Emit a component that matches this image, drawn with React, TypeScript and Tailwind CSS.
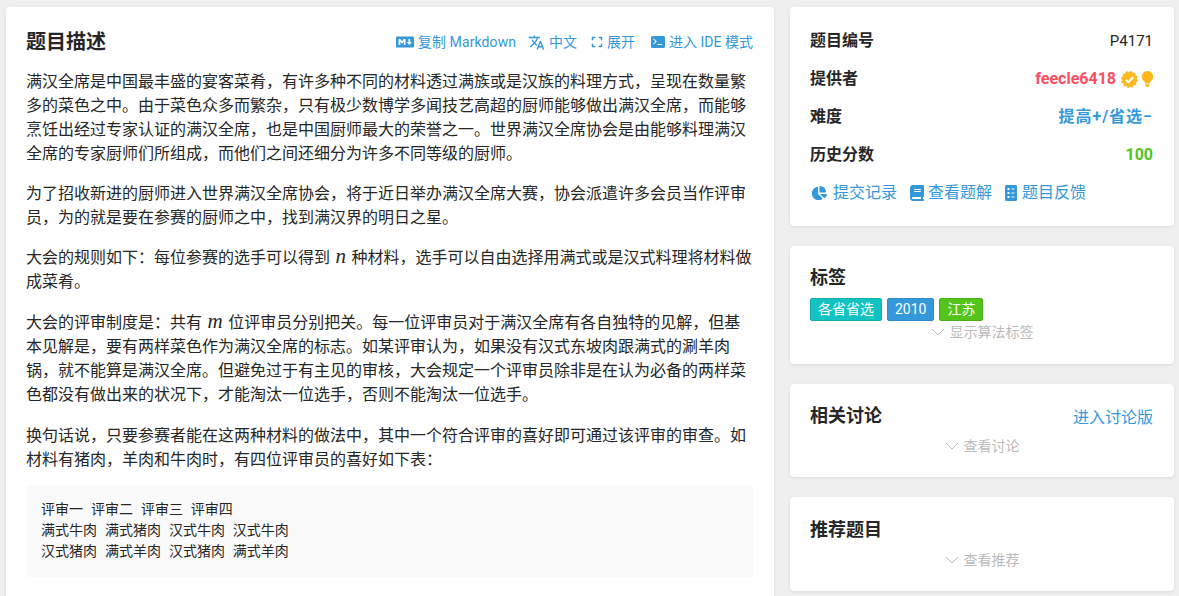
import type { ReactNode } from 'react'
import { FaBook, FaChartPie, FaExpand, FaMarkdown } from 'react-icons/fa6'
import { MdTranslate } from 'react-icons/md'

const font = 'font-["Roboto","Noto_Sans_CJK_SC",sans-serif]'

function Card({ className, children }: { className?: string; children: ReactNode }) {
  return <div className={`rounded bg-white shadow-[0_1px_3px_rgba(26,26,26,0.1)] ${className ?? ''}`}>{children}</div>
}

function Var({ children }: { children: string }) {
  return <span className='mx-[5.5px] font-["Liberation_Serif",serif] text-[21px] leading-none italic'>{children}</span>
}

function ActionLink({ icon, label, className }: { icon: ReactNode; label: string; className?: string }) {
  return (
    <span className={`flex items-center gap-1 text-[14px] text-[#3498db] ${className ?? ''}`}>
      {icon}
      {label}
    </span>
  )
}

function InfoRow({ label, children }: { label: string; children: ReactNode }) {
  return (
    <div className="flex h-[38px] items-center justify-between text-[16px]">
      <span className="font-semibold text-[#262626]">{label}</span>
      {children}
    </div>
  )
}

function Reveal({ label, className }: { label: string; className?: string }) {
  return (
    <div className={`flex h-5 items-center justify-center gap-[5px] text-[14px] text-[#bbbbbb] ${className ?? ''}`}>
      <svg viewBox="0 0 14 8" className="h-2 w-[14px]" fill="none" stroke="currentColor" strokeWidth="1">
        <path d="M1 1l6 6 6-6" />
      </svg>
      {label}
    </div>
  )
}

function Tag({ color, children }: { color: string; children: string }) {
  return (
    <span className={`flex h-[23px] items-center rounded-[2px] border px-[7px] text-[14px] text-white ${color}`}>{children}</span>
  )
}

export default function App() {
  return (
    <div className={`flex h-[596px] gap-4 overflow-hidden bg-[#efefef] pl-[6px] pr-[5px] pt-[7px] text-[#262626] ${font}`}>
      <Card className="h-[640px] w-[768px] shrink-0 px-5 pt-5">
        <div className="mt-[2px] flex h-[26px] items-center justify-between pr-px">
          <h2 className="text-[20px] font-bold">题目描述</h2>
          <div className="flex items-center gap-[14px]">
            <ActionLink label="复制 Markdown" className="-mr-[2px] tracking-[0.1px]" icon={<FaMarkdown className="h-[18px] w-[18px]" />} />
            <ActionLink label="中文" icon={<MdTranslate className="h-[17px] w-[17px]" />} />
            <ActionLink label="展开" icon={<FaExpand className="h-3 w-3" />} />
            <ActionLink
              label="进入 IDE 模式"
              className="ml-[2px]"
              icon={
                <svg viewBox="0 0 14 12" className="h-3 w-[14px]" fill="currentColor">
                  <path fillRule="evenodd" d="M1.500 0h11A1.500 1.500 0 0 1 14 1.500v9a1.500 1.500 0 0 1-1.500 1.500h-11A1.500 1.500 0 0 1 0 10.500v-9A1.500 1.500 0 0 1 1.500 0zM2.500 2.500 2 3l2.500 2.500L2 8l.5.500L6 5.500 2.500 2.500zM6.500 8v1H11V8H6.500z" />
                </svg>
              }
            />
          </div>
        </div>
        <div className="mt-[15px] text-[16px] leading-6">
          <p className="mb-4">满汉全席是中国最丰盛的宴客菜肴，有许多种不同的材料透过满族或是汉族的料理方式，呈现在数量繁多的菜色之中。由于菜色众多而繁杂，只有极少数博学多闻技艺高超的厨师能够做出满汉全席，而能够烹饪出经过专家认证的满汉全席，也是中国厨师最大的荣誉之一。世界满汉全席协会是由能够料理满汉全席的专家厨师们所组成，而他们之间还细分为许多不同等级的厨师。</p>
          <p className="mb-4">为了招收新进的厨师进入世界满汉全席协会，将于近日举办满汉全席大赛，协会派遣许多会员当作评审员，为的就是要在参赛的厨师之中，找到满汉界的明日之星。</p>
          <p className="mb-[17px]">大会的规则如下：每位参赛的选手可以得到<Var>n</Var>种材料，选手可以自由选择用满式或是汉式料理将材料做成菜肴。</p>
          <p className="mb-[17px]">大会的评审制度是：共有<Var>m</Var>位评审员分别把关。每一位评审员对于满汉全席有各自独特的见解，但基本见解是，要有两样菜色作为满汉全席的标志。如某评审认为，如果没有汉式东坡肉跟满式的涮羊肉锅，就不能算是满汉全席。但避免过于有主见的审核，大会规定一个评审员除非是在认为必备的两样菜色都没有做出来的状况下，才能淘汰一位选手，否则不能淘汰一位选手。</p>
          <p className="mb-[14px]">换句话说，只要参赛者能在这两种材料的做法中，其中一个符合评审的喜好即可通过该评审的审查。如材料有猪肉，羊肉和牛肉时，有四位评审员的喜好如下表：</p>
          <pre className={`mr-px rounded-[3px] bg-[#fafafa] px-[15px] pb-[15px] pt-[13px] text-[14px] leading-[21px] [word-spacing:0.5px] ${font}`}>
            {'评审一  评审二  评审三  评审四\n满式牛肉  满式猪肉  汉式牛肉  汉式牛肉\n汉式猪肉  满式羊肉  汉式猪肉  满式羊肉'}
          </pre>
        </div>
      </Card>
      <div className="flex flex-1 flex-col gap-5">
        <Card className="h-[219px] px-5 pt-[15px]">
          <InfoRow label="题目编号">
            <span className="pr-px text-[15px]">P4171</span>
          </InfoRow>
          <InfoRow label="提供者">
            <span className="flex items-center">
              <span className="mr-[5px] text-[16px] font-bold text-[#fe4c61]">feecle6418</span>
              <svg viewBox="0 0 17 17" className="mr-[3px] h-[17px] w-[17px]">
                <circle cx="8.5" cy="8.500" r="7.500" fill="#fbb81f" />
                <circle cx="8.500" cy="8.500" r="7.700" fill="none" stroke="#fbb81f" strokeWidth="1.400" strokeDasharray="2.400 1.630" />
                <path d="M4.800 8.800 7.500 11.300 12.200 6" fill="none" stroke="#fff" strokeWidth="2" />
              </svg>
              <svg viewBox="0 0 14 18" className="h-4 w-[13px]" fill="#fbb81f">
                <path d="M7 0a6.500 6.500 0 0 1 4 11.600c-.8.700-1.500 1.500-1.700 2.400H4.700c-.2-.9-.9-1.700-1.700-2.400A6.500 6.500 0 0 1 7 0zM4.800 15h4.400v1.200a1.800 1.800 0 0 1-1.800 1.800H6.600a1.800 1.800 0 0 1-1.800-1.800V15z" />
              </svg>
            </span>
          </InfoRow>
          <InfoRow label="难度">
            <span className="pr-px font-bold tracking-[1px] text-[#3498db]">提高+/省选−</span>
          </InfoRow>
          <InfoRow label="历史分数">
            <span className="pr-px text-[16px] font-bold text-[#52c41a]">100</span>
          </InfoRow>
          <div className="flex h-[38px] items-center gap-[13px] text-[16px] text-[#3498db]">
            <span className="flex items-center gap-[6px] pl-px">
              <FaChartPie className="h-4 w-4" />
              提交记录
            </span>
            <span className="flex items-center gap-1">
              <FaBook className="h-4 w-[14px]" />
              查看题解
            </span>
            <span className="flex items-center gap-[5px]">
              <svg viewBox="0 0 12 16" className="h-4 w-3" fill="currentColor">
                <path fillRule="evenodd" d="M1.500 0h9A1.500 1.500 0 0 1 12 1.500v13a1.500 1.500 0 0 1-1.500 1.500h-9A1.500 1.500 0 0 1 0 14.500v-13A1.500 1.500 0 0 1 1.500 0zM2.500 3v2h2V3h-2zm4 .500v1h3v-1h-3zM2.500 7v2h2V7h-2zm4 .500v1h3v-1h-3zM2.500 11v2h2v-2h-2zm4 .500v1h3v-1h-3z" />
              </svg>
              题目反馈
            </span>
          </div>
        </Card>
        <Card className="h-[118px] px-5 pt-5">
          <h3 className="text-[18px] font-bold leading-6">标签</h3>
          <div className="mt-2 flex gap-[5px]">
            <Tag color="border-[#10b0b0] bg-[#13c2c2]">各省省选</Tag>
            <Tag color="border-[#2e8cc9] bg-[#3498db]">2010</Tag>
            <Tag color="border-[#4ab017] bg-[#52c41a]">江苏</Tag>
          </div>
          <Reveal label="显示算法标签" className="mt-[1px]" />
        </Card>
        <Card className="h-[93px] px-5 pt-[18px]">
          <div className="flex items-center justify-between">
            <h3 className="text-[18px] font-bold leading-6">相关讨论</h3>
            <span className="mt-1 pr-px text-[16px] text-[#3498db]">进入讨论版</span>
          </div>
          <Reveal label="查看讨论" className="mt-[6px]" />
        </Card>
        <Card className="h-[94px] px-5 pt-[21px]">
          <h3 className="text-[18px] font-bold leading-6">推荐题目</h3>
          <Reveal label="查看推荐" className="mt-2" />
        </Card>
      </div>
    </div>
  )
}
